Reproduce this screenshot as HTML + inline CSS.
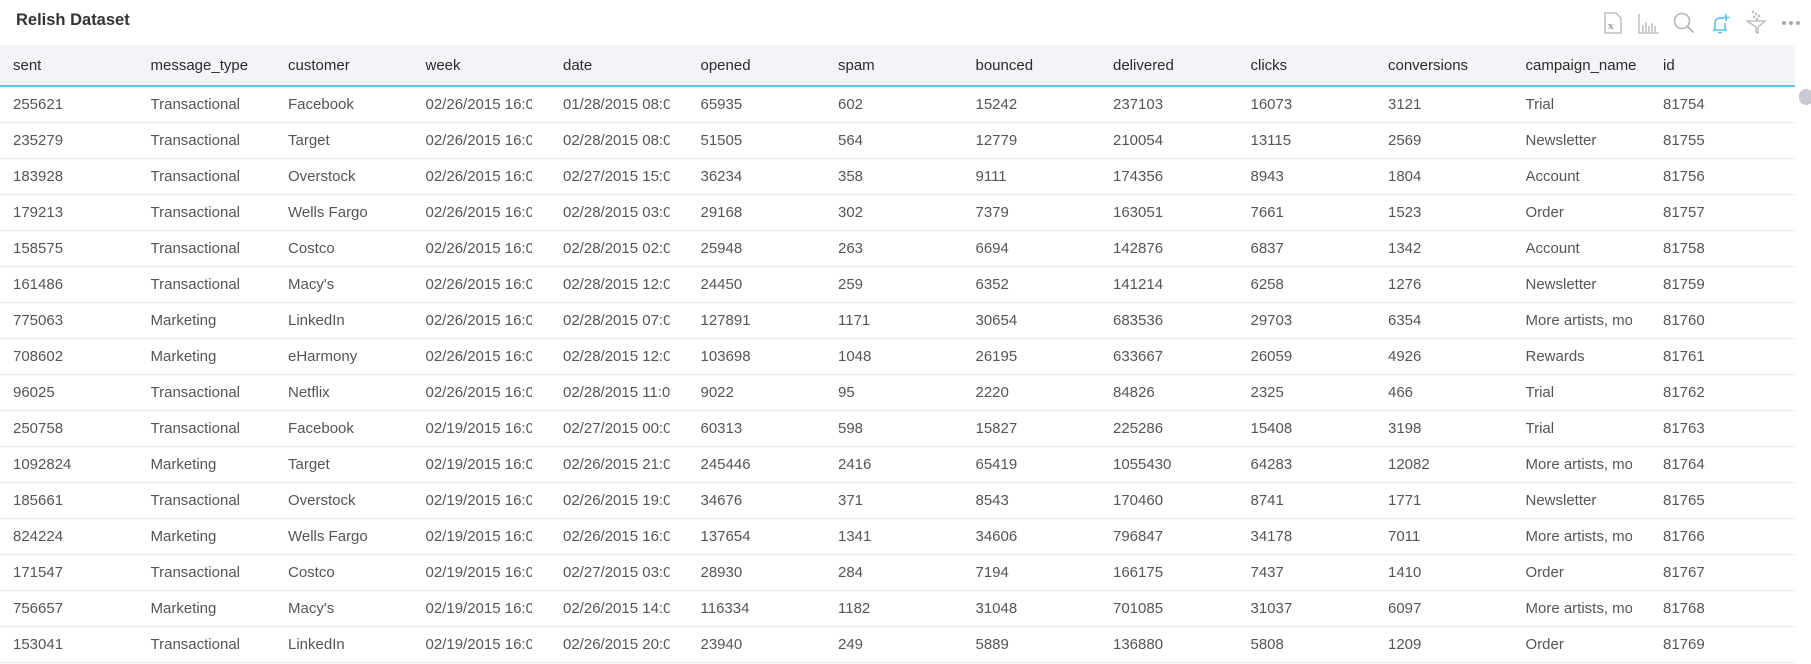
<!DOCTYPE html>
<html><head><meta charset="utf-8"><style>
*{margin:0;padding:0;box-sizing:border-box}
body{width:1811px;height:664px;background:#fff;font-family:"Liberation Sans",Arial,sans-serif;overflow:hidden;position:relative}
.title{position:absolute;left:16px;top:11px;font-size:16.5px;font-weight:bold;color:#333}
.icons{position:absolute;top:12px;left:0}
.icons svg{position:absolute}
table{position:absolute;left:0;top:45px;width:1795px;border-collapse:collapse;table-layout:fixed}
th{height:41px;background:#f3f4f7;text-align:left;font-weight:normal;color:#2a2a2a;font-size:15px;padding-left:13px}
tr:first-child{border-bottom:2px solid #5ccbe9}
tr{border-bottom:1px solid #ececec}
td{height:36px;color:#555;font-size:15px;padding-left:13px;white-space:nowrap;overflow:hidden;clip-path:inset(0 18px 0 0)}
col{width:137.5px}
.sb{position:absolute;left:1799px;top:89px;width:14px;height:16px;border-radius:8px;background:#c9c9d3}
</style></head><body>
<div class="title">Relish Dataset</div>
<div class="icons">
<svg style="left:1604px" width="18" height="22" viewBox="0 0 18 22"><path d="M1 1h11l5 5v15H1z" fill="none" stroke="#b5b5b5" stroke-width="1.3"/><text x="4" y="17" font-size="11" font-family="Liberation Serif" fill="#999" font-weight="bold">x</text></svg>
<svg style="left:1638px;top:2px" width="22" height="20" viewBox="0 0 22 20"><path d="M1 0v19h20M5 18v-7M8 18v-10M11 18v-6M14 18v-9M17 18v-6" stroke="#b5b5b5" stroke-width="1.3" fill="none"/></svg>
<svg style="left:1673px;top:0px" width="22" height="22" viewBox="0 0 22 22"><circle cx="9" cy="9" r="7.5" stroke="#b5b5b5" stroke-width="1.6" fill="none"/><path d="M14.5 14.5l6 6" stroke="#b5b5b5" stroke-width="1.8"/></svg>
<svg style="left:1710px;top:0px" width="22" height="22" viewBox="0 0 22 22"><path d="M3 18h14M5 18v-7a5 5 0 0 1 8-4M15 11v7M8 20.5h4M16 2v7M12.5 5.5h7" stroke="#5bc0ee" stroke-width="1.6" fill="none"/></svg>
<svg style="left:1746px;top:-2px" width="22" height="24" viewBox="0 0 22 24"><g fill="#b5b5b5"><circle cx="7" cy="2" r="1.2"/><circle cx="10" cy="4" r="1.2"/><circle cx="13" cy="6" r="1.2"/><circle cx="8" cy="7" r="1.2"/><circle cx="11" cy="9" r="1.2"/></g><path d="M1 11h18l-7 6v6l-2-1v-5z" fill="none" stroke="#b5b5b5" stroke-width="1.3"/></svg>
<svg style="left:1781px;top:8px" width="20" height="6" viewBox="0 0 20 6"><g fill="#aaa"><circle cx="3" cy="3" r="2"/><circle cx="10" cy="3" r="2"/><circle cx="17" cy="3" r="2"/></g></svg>
</div>
<table>
<colgroup><col><col><col><col><col><col><col><col><col><col><col><col><col style="width:145px"></colgroup>
<tr><th>sent</th><th>message_type</th><th>customer</th><th>week</th><th>date</th><th>opened</th><th>spam</th><th>bounced</th><th>delivered</th><th>clicks</th><th>conversions</th><th>campaign_name</th><th>id</th></tr>
<tr><td>255621</td><td>Transactional</td><td>Facebook</td><td>02/26/2015 16:00</td><td>01/28/2015 08:00</td><td>65935</td><td>602</td><td>15242</td><td>237103</td><td>16073</td><td>3121</td><td>Trial</td><td>81754</td></tr>
<tr><td>235279</td><td>Transactional</td><td>Target</td><td>02/26/2015 16:00</td><td>02/28/2015 08:00</td><td>51505</td><td>564</td><td>12779</td><td>210054</td><td>13115</td><td>2569</td><td>Newsletter</td><td>81755</td></tr>
<tr><td>183928</td><td>Transactional</td><td>Overstock</td><td>02/26/2015 16:00</td><td>02/27/2015 15:00</td><td>36234</td><td>358</td><td>9111</td><td>174356</td><td>8943</td><td>1804</td><td>Account</td><td>81756</td></tr>
<tr><td>179213</td><td>Transactional</td><td>Wells Fargo</td><td>02/26/2015 16:00</td><td>02/28/2015 03:00</td><td>29168</td><td>302</td><td>7379</td><td>163051</td><td>7661</td><td>1523</td><td>Order</td><td>81757</td></tr>
<tr><td>158575</td><td>Transactional</td><td>Costco</td><td>02/26/2015 16:00</td><td>02/28/2015 02:00</td><td>25948</td><td>263</td><td>6694</td><td>142876</td><td>6837</td><td>1342</td><td>Account</td><td>81758</td></tr>
<tr><td>161486</td><td>Transactional</td><td>Macy's</td><td>02/26/2015 16:00</td><td>02/28/2015 12:00</td><td>24450</td><td>259</td><td>6352</td><td>141214</td><td>6258</td><td>1276</td><td>Newsletter</td><td>81759</td></tr>
<tr><td>775063</td><td>Marketing</td><td>LinkedIn</td><td>02/26/2015 16:00</td><td>02/28/2015 07:00</td><td>127891</td><td>1171</td><td>30654</td><td>683536</td><td>29703</td><td>6354</td><td>More artists, more</td><td>81760</td></tr>
<tr><td>708602</td><td>Marketing</td><td>eHarmony</td><td>02/26/2015 16:00</td><td>02/28/2015 12:00</td><td>103698</td><td>1048</td><td>26195</td><td>633667</td><td>26059</td><td>4926</td><td>Rewards</td><td>81761</td></tr>
<tr><td>96025</td><td>Transactional</td><td>Netflix</td><td>02/26/2015 16:00</td><td>02/28/2015 11:00</td><td>9022</td><td>95</td><td>2220</td><td>84826</td><td>2325</td><td>466</td><td>Trial</td><td>81762</td></tr>
<tr><td>250758</td><td>Transactional</td><td>Facebook</td><td>02/19/2015 16:00</td><td>02/27/2015 00:00</td><td>60313</td><td>598</td><td>15827</td><td>225286</td><td>15408</td><td>3198</td><td>Trial</td><td>81763</td></tr>
<tr><td>1092824</td><td>Marketing</td><td>Target</td><td>02/19/2015 16:00</td><td>02/26/2015 21:00</td><td>245446</td><td>2416</td><td>65419</td><td>1055430</td><td>64283</td><td>12082</td><td>More artists, more</td><td>81764</td></tr>
<tr><td>185661</td><td>Transactional</td><td>Overstock</td><td>02/19/2015 16:00</td><td>02/26/2015 19:00</td><td>34676</td><td>371</td><td>8543</td><td>170460</td><td>8741</td><td>1771</td><td>Newsletter</td><td>81765</td></tr>
<tr><td>824224</td><td>Marketing</td><td>Wells Fargo</td><td>02/19/2015 16:00</td><td>02/26/2015 16:00</td><td>137654</td><td>1341</td><td>34606</td><td>796847</td><td>34178</td><td>7011</td><td>More artists, more</td><td>81766</td></tr>
<tr><td>171547</td><td>Transactional</td><td>Costco</td><td>02/19/2015 16:00</td><td>02/27/2015 03:00</td><td>28930</td><td>284</td><td>7194</td><td>166175</td><td>7437</td><td>1410</td><td>Order</td><td>81767</td></tr>
<tr><td>756657</td><td>Marketing</td><td>Macy's</td><td>02/19/2015 16:00</td><td>02/26/2015 14:00</td><td>116334</td><td>1182</td><td>31048</td><td>701085</td><td>31037</td><td>6097</td><td>More artists, more</td><td>81768</td></tr>
<tr><td>153041</td><td>Transactional</td><td>LinkedIn</td><td>02/19/2015 16:00</td><td>02/26/2015 20:00</td><td>23940</td><td>249</td><td>5889</td><td>136880</td><td>5808</td><td>1209</td><td>Order</td><td>81769</td></tr>
</table>
<div class="sb"></div>
</body></html>
